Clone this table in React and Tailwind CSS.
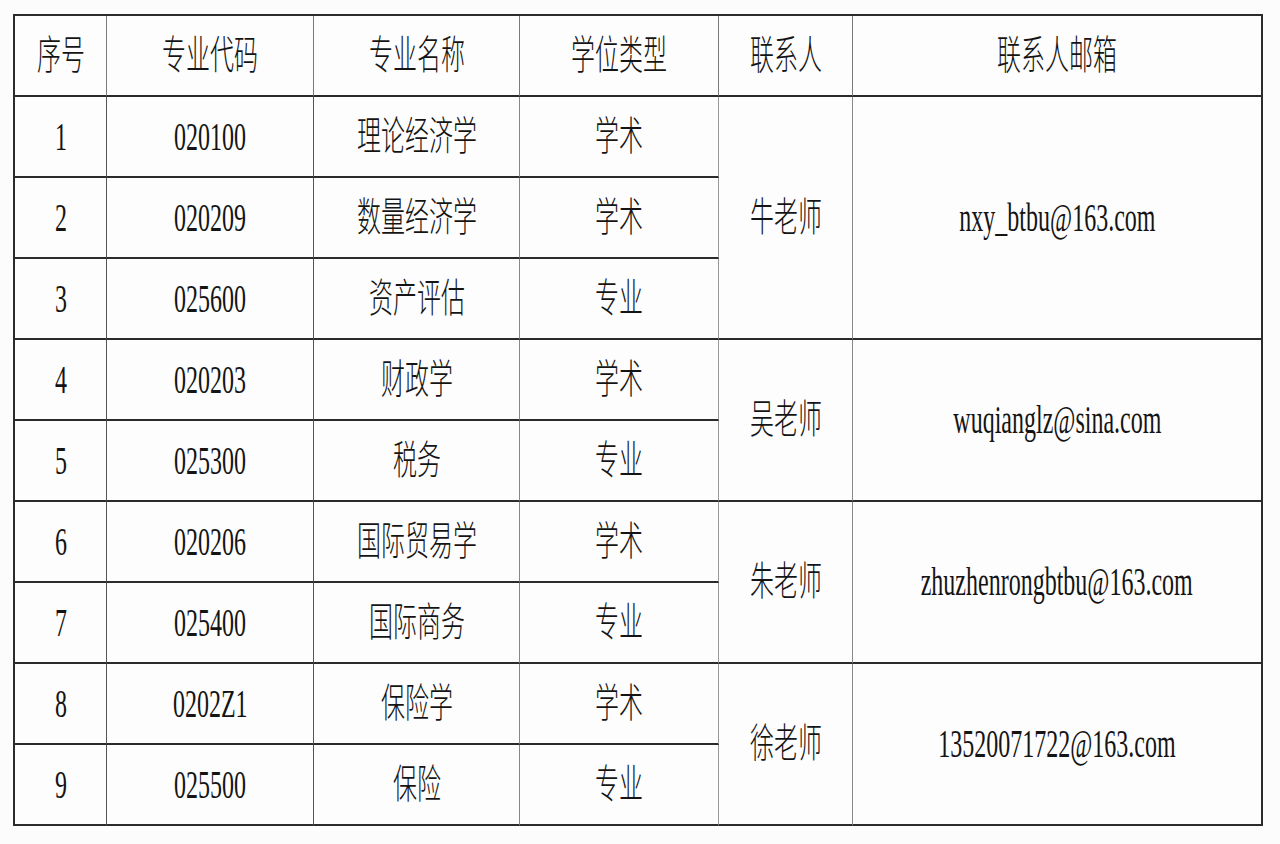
import React from 'react';

const rows = [
  { no: '1', code: '020100', name: '理论经济学', type: '学术' },
  { no: '2', code: '020209', name: '数量经济学', type: '学术' },
  { no: '3', code: '025600', name: '资产评估', type: '专业' },
  { no: '4', code: '020203', name: '财政学', type: '学术' },
  { no: '5', code: '025300', name: '税务', type: '专业' },
  { no: '6', code: '020206', name: '国际贸易学', type: '学术' },
  { no: '7', code: '025400', name: '国际商务', type: '专业' },
  { no: '8', code: '0202Z1', name: '保险学', type: '学术' },
  { no: '9', code: '025500', name: '保险', type: '专业' },
];

// contact groups: start row (1-based among body rows) + span
const contacts = [
  { start: 1, span: 3, name: '牛老师', email: 'nxy_btbu@163.com' },
  { start: 4, span: 2, name: '吴老师', email: 'wuqianglz@sina.com' },
  { start: 6, span: 2, name: '朱老师', email: 'zhuzhenrongbtbu@163.com' },
  { start: 8, span: 2, name: '徐老师', email: '13520071722@163.com' },
];

const rowStart = ['row-start-2', 'row-start-3', 'row-start-4', 'row-start-5', 'row-start-6', 'row-start-7', 'row-start-8', 'row-start-9', 'row-start-10'];
const rowSpan = { 2: 'row-span-2', 3: 'row-span-3' };

const Txt = ({ children }) => (
  <span className="inline-block scale-x-[0.6] whitespace-nowrap text-[40px] font-light leading-none text-[#141414]">
    {children}
  </span>
);

const Cell = ({ children, className = '' }) => (
  <div className={`flex items-center justify-center overflow-visible border-b-2 border-b-[#2b2b2b] ${className}`}>
    <Txt>{children}</Txt>
  </div>
);

const headers = ['序号', '专业代码', '专业名称', '学位类型', '联系人', '联系人邮箱'];

export default function App() {
  return (
    <div
      className="w-[1280px] h-[844px] bg-[#fcfcfc] pt-[14px] pl-[13px]"
      style={{ fontFamily: '"Liberation Serif", "Noto Sans CJK SC", serif' }}
    >
      <div className="inline-grid grid-cols-[92px_207px_206px_199px_134px_410px] grid-rows-[81px_repeat(9,81px)] border-t-2 border-l-2 border-[#2b2b2b] bg-[#fdfdfd]">
        {headers.map((h, i) => (
          <Cell
            key={h}
            className={i === 5 ? 'border-r-2 border-r-[#2b2b2b]' : 'border-r border-r-[#7a7a7a]'}
          >
            {h}
          </Cell>
        ))}
        {rows.map((r, i) => (
          <React.Fragment key={r.no}>
            <Cell className={`col-start-1 ${rowStart[i]} border-r border-r-[#555]`}>{r.no}</Cell>
            <Cell className={`col-start-2 ${rowStart[i]} border-r border-r-[#555]`}>{r.code}</Cell>
            <Cell className={`col-start-3 ${rowStart[i]} border-r border-r-[#888]`}>{r.name}</Cell>
            <Cell className={`col-start-4 ${rowStart[i]} border-r border-r-[#999]`}>{r.type}</Cell>
          </React.Fragment>
        ))}
        {contacts.map((c) => (
          <React.Fragment key={c.name}>
            <Cell className={`col-start-5 ${rowStart[c.start - 1]} ${rowSpan[c.span]} border-r border-r-[#888]`}>
              {c.name}
            </Cell>
            <Cell className={`col-start-6 ${rowStart[c.start - 1]} ${rowSpan[c.span]} border-r-2 border-r-[#2b2b2b]`}>
              {c.email}
            </Cell>
          </React.Fragment>
        ))}
      </div>
    </div>
  );
}
